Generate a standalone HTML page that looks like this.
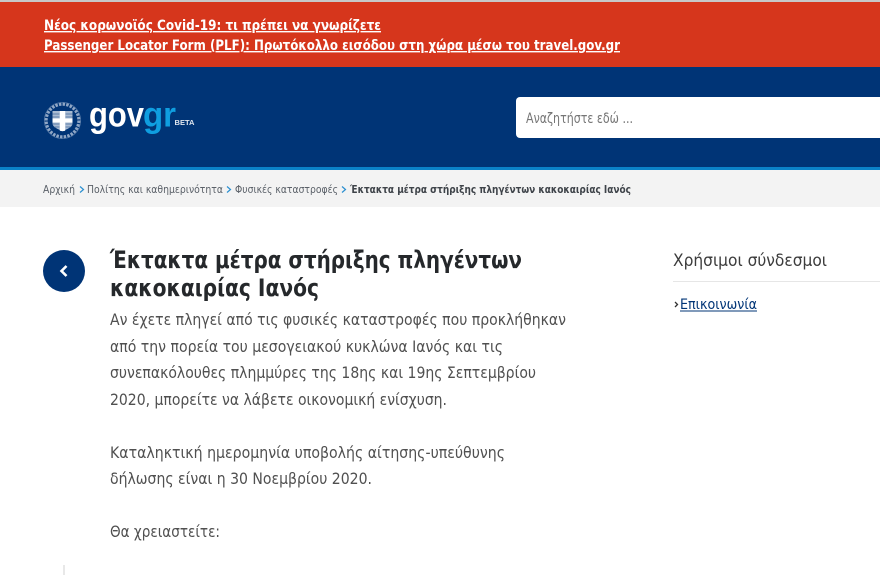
<!DOCTYPE html>
<html lang="el">
<head>
<meta charset="utf-8">
<title>Έκτακτα μέτρα στήριξης πληγέντων κακοκαιρίας Ιανός</title>
<style>
html,body{margin:0;padding:0;background:#fff;width:880px;height:575px;overflow:hidden}
.b{position:absolute}
svg{position:absolute;left:0;top:0}
text{font-family:"DejaVu Sans","Liberation Sans",sans-serif;white-space:pre}
</style>
</head>
<body>
<div class="b" style="left:0;top:0;width:880px;height:2px;background:#c8c8c8"></div>
<div class="b" style="left:0;top:2px;width:880px;height:65px;background:#d6361c"></div>
<div class="b" style="left:0;top:67px;width:880px;height:100px;background:#003476"></div>
<div class="b" style="left:0;top:167px;width:880px;height:3px;background:#0b82c8"></div>
<div class="b" style="left:0;top:170px;width:880px;height:37px;background:#f3f3f3"></div>
<div class="b" style="left:516px;top:97px;width:370px;height:41px;background:#fff;border-radius:4px"></div>
<div class="b" style="left:43px;top:250px;width:42px;height:42px;background:#003476;border-radius:50%"></div>
<div class="b" style="left:673px;top:281px;width:207px;height:1px;background:#e6e6e6"></div>
<div class="b" style="left:63px;top:565px;width:2px;height:10px;background:#e8e8e8"></div>

<svg width="880" height="575" viewBox="0 0 880 575">
  <!-- banner -->
  <g fill="#fff" font-weight="700" font-size="14">
    <text x="44" y="30" textLength="337" lengthAdjust="spacingAndGlyphs" text-decoration="underline">Νέος κορωνοϊός Covid-19: τι πρέπει να γνωρίζετε</text>
    <text x="44" y="50" textLength="576" lengthAdjust="spacingAndGlyphs" text-decoration="underline">Passenger Locator Form (PLF): Πρωτόκολλο εισόδου στη χώρα μέσω του travel.gov.gr</text>
  </g>

  <!-- emblem -->
  <g transform="translate(62.5,120.5)">
    <circle r="16.5" fill="none" stroke="#8fa6c5" stroke-width="3.4" stroke-dasharray="2.5 1.2"/>
    <circle r="18.2" fill="none" stroke="#4e73a2" stroke-width=".7"/>
    <path d="M-10-9.5H10V3Q10 7 0 10.5Q-10 7-10 3Z" fill="#a9bbd2"/>
    <path d="M-10-6.5H-3M3-6.5H10M-10-3.5H-3M3-3.5H10M-10 3.5H-3M3 3.5H10M-8 6.5H-3M3 6.5H8" stroke="#5f7fa9" stroke-width="1" fill="none"/>
    <path d="M-2.7-9.5H2.7V-2H10V2H2.7V10.2L0 10.8L-2.7 10.2V2H-10V-2H-2.7Z" fill="#fff"/>
  </g>

  <!-- logo -->
  <text x="89" y="126.5" font-size="35" font-weight="700" style='font-family:"Liberation Sans",sans-serif' fill="#fff" textLength="55" lengthAdjust="spacingAndGlyphs">gov</text>
  <text x="143" y="126.5" font-size="35" font-weight="700" style='font-family:"Liberation Sans",sans-serif' fill="#0f9ee0" textLength="33" lengthAdjust="spacingAndGlyphs">gr</text>
  <text x="174.5" y="125" font-size="7.5" font-weight="700" style='font-family:"Liberation Sans",sans-serif' fill="#dfe6ef" textLength="20" lengthAdjust="spacingAndGlyphs">BETA</text>

  <!-- search -->
  <text x="526" y="123" font-size="14" fill="#757575" textLength="107" lengthAdjust="spacingAndGlyphs">Αναζητήστε εδώ ...</text>

  <!-- breadcrumb -->
  <g font-size="11" fill="#5a6068">
    <text x="43" y="193" textLength="32" lengthAdjust="spacingAndGlyphs">Αρχική</text>
    <text x="87" y="193" textLength="136" lengthAdjust="spacingAndGlyphs">Πολίτης και καθημερινότητα</text>
    <text x="235" y="193" textLength="103" lengthAdjust="spacingAndGlyphs">Φυσικές καταστροφές</text>
    <text x="350" y="193" font-weight="700" fill="#3e4349" textLength="281" lengthAdjust="spacingAndGlyphs">Έκτακτα μέτρα στήριξης πληγέντων κακοκαιρίας Ιανός</text>
  </g>
  <g fill="none" stroke="#2a8fd0" stroke-width="1.2">
    <path d="M80 186.5L83.5 189.5L80 192.5"/>
    <path d="M227 186.5L230.5 189.5L227 192.5"/>
    <path d="M342 186.5L345.5 189.5L342 192.5"/>
  </g>

  <!-- back arrow -->
  <path d="M66.5 266L61.5 271L66.5 276" fill="none" stroke="#fff" stroke-width="2.6"/>

  <!-- title -->
  <g font-size="24" font-weight="700" fill="#25282b">
    <text x="110" y="268" textLength="412" lengthAdjust="spacingAndGlyphs">Έκτακτα μέτρα στήριξης πληγέντων</text>
    <text x="110" y="296" textLength="209" lengthAdjust="spacingAndGlyphs">κακοκαιρίας Ιανός</text>
  </g>

  <!-- body -->
  <g font-size="16" fill="#505050">
    <text x="110" y="325" textLength="456" lengthAdjust="spacingAndGlyphs">Αν έχετε πληγεί από τις φυσικές καταστροφές που προκλήθηκαν</text>
    <text x="110" y="352" textLength="393" lengthAdjust="spacingAndGlyphs">από την πορεία του μεσογειακού κυκλώνα Ιανός και τις</text>
    <text x="110" y="378" textLength="426" lengthAdjust="spacingAndGlyphs">συνεπακόλουθες πλημμύρες της 18ης και 19ης Σεπτεμβρίου</text>
    <text x="110" y="405" textLength="337" lengthAdjust="spacingAndGlyphs">2020, μπορείτε να λάβετε οικονομική ενίσχυση.</text>
    <text x="110" y="458" textLength="395" lengthAdjust="spacingAndGlyphs">Καταληκτική ημερομηνία υποβολής αίτησης-υπεύθυνης</text>
    <text x="110" y="484" textLength="262" lengthAdjust="spacingAndGlyphs">δήλωσης είναι η 30 Νοεμβρίου 2020.</text>
    <text x="110" y="537" textLength="110" lengthAdjust="spacingAndGlyphs">Θα χρειαστείτε:</text>
  </g>

  <!-- sidebar -->
  <text x="673" y="266" font-size="17" fill="#3c3c3c" textLength="154" lengthAdjust="spacingAndGlyphs">Χρήσιμοι σύνδεσμοι</text>
  <path d="M675 302L677.5 304.5L675 307" fill="none" stroke="#333" stroke-width="1.3"/>
  <text x="680" y="309" font-size="14" fill="#003476" textLength="77" lengthAdjust="spacingAndGlyphs">Επικοινωνία</text>
  <rect x="680" y="310.5" width="77" height="1" fill="#003476"/>
</svg>
</body>
</html>
